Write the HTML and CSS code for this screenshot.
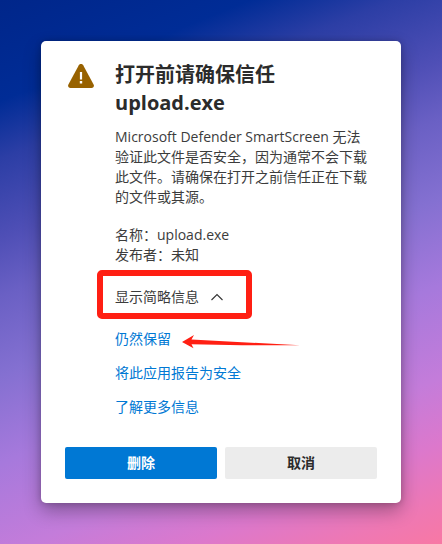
FILE: index.html
```html
<!DOCTYPE html>
<html lang="zh-CN">
<head>
<meta charset="utf-8">
<meta name="viewport" content="width=device-width, initial-scale=1">
<title>打开前请确保信任 upload.exe</title>
<link rel="stylesheet" href="styles.css">
</head>
<body>
<main class="dialog" role="dialog" aria-labelledby="title">
  <div class="content">
    <svg class="warning" viewBox="0 0 26 24" aria-hidden="true">
      <path d="M13 0c1 0 1.700.4 2.200 1.300l10.400 19.200c.9 1.700-.1 3.500-2 3.500H2.400c-1.900 0-2.900-1.800-2-3.500L10.800 1.300C11.300.4 12 0 13 0Z" fill="#986200"/>
      <path d="M11.900 8h2.200v7.500h-2.200zM11.800 17h2.400v2.400h-2.400z" fill="#fff"/>
    </svg>
    <div class="text">
      <h1 id="title">打开前请确保信任<br>upload.exe</h1>
      <p>Microsoft Defender SmartScreen 无法验证此文件是否安全，因为通常不会下载此文件。请确保在打开之前信任正在下载的文件或其源。</p>
      <p class="details">名称：upload.exe<br>发布者：未知</p>
      <button class="toggle" type="button" aria-expanded="true">显示简略信息
        <svg class="chevron" viewBox="0 0 12 8" aria-hidden="true"><path d="M.5 7 6 1.500 11.500 7" fill="none" stroke="#333" stroke-width="1.100"/></svg>
      </button>
      <ul class="links">
        <li><a href="#keep">仍然保留</a>
          <svg class="arrow" viewBox="0 0 118 14" aria-hidden="true"><path d="M0 7 12 0 9.500 4.600 60 7.200 118 10.300 60 10.300 9.500 9.200 11.500 13.200Z" fill="#ff1f13"/></svg>
        </li>
        <li><a href="#report">将此应用报告为安全</a></li>
        <li><a href="#more">了解更多信息</a></li>
      </ul>
    </div>
  </div>
  <div class="actions">
    <button class="action primary" type="button">删除</button>
    <button class="action" type="button">取消</button>
  </div>
</main>
</body>
</html>
```
FILE: styles.css
```css
*,
*::before {
  box-sizing: border-box;
}

body {
  min-height: 100vh;
  margin: 0;
  padding: 41px;
  font: 14px/20px "Open Sans", "Noto Sans CJK SC", sans-serif;
  color: #3c3c3c;
  background: linear-gradient(158deg, #00268a 0%, #002c96 14%, #2c3ea5 22%, #4f4fb6 33%, #6a60c4 41%, #8470d1 52%, #a679dc 64%, #c47cda 77%, #dc78cc 86%, #ee78b4 94%, #f878a4 100%);
}

.dialog {
  padding: 20px 24px 24px;
  border-radius: 5px;
  background: #fff;
  box-shadow: 0 8px 18px #0000004d, 0 0 6px #00000033;
}

.content {
  display: flex;
  gap: 21px;
}

.warning {
  flex: none;
  width: 26px;
  height: 24px;
  margin: 3px 0 0 3px;
}

.text {
  flex: 1;
  min-width: 0;
  padding-right: 8px;
}

h1 {
  margin: 0 0 10px;
  font-size: 20px;
  line-height: 28px;
  font-weight: 700;
  color: #2b2b2b;
}

p {
  margin: 0;
}

.details {
  margin-top: 18px;
}

button {
  border: 0;
  font: inherit;
  color: inherit;
}

.toggle {
  position: relative;
  display: flex;
  align-items: center;
  gap: 12px;
  margin-top: 22px;
  padding: 0;
  background: none;
}

.toggle::before {
  content: "";
  position: absolute;
  top: -17px;
  left: -18px;
  width: 155px;
  height: 49px;
  border: 6px solid #ff1f13;
  border-radius: 5px;
}

.chevron {
  width: 12px;
  height: 8px;
}

.links {
  display: grid;
  gap: 14px;
  margin: 22px 0 0;
  padding: 0;
  list-style: none;
}

.links li {
  position: relative;
}

a {
  color: #0078d4;
  text-decoration: none;
}

.arrow {
  position: absolute;
  top: 6px;
  left: 67px;
  width: 118px;
  height: 14px;
}

.actions {
  display: grid;
  grid-template-columns: 1fr 1fr;
  gap: 8px;
  margin-top: 30px;
}

.action {
  height: 32px;
  border-radius: 2px;
  background: #ececec;
  color: #2b2b2b;
  font-weight: 600;
}

.action.primary {
  background: #0078d4;
  color: #fff;
}
```
